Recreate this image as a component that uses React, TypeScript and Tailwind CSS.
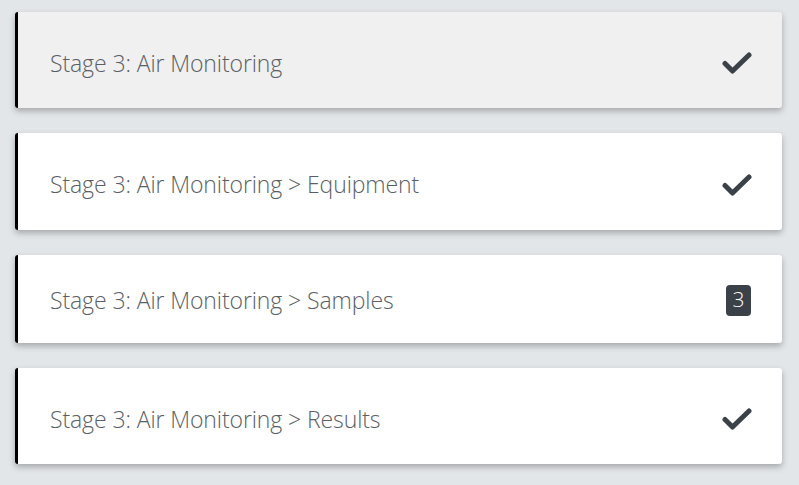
import React from "react";

const Check = () => (
  <svg width="30" height="22" viewBox="0 0 30 22" className="block">
    <path d="M3 11.5 L10.5 19 L27 3" fill="none" stroke="#3b4148" strokeWidth="5" strokeLinecap="round" strokeLinejoin="round" />
  </svg>
);

type Item = { label: string; status: "check" | number; bg: string; h: string; pt: string };

const items: Item[] = [
  { label: "Stage 3: Air Monitoring", status: "check", bg: "bg-[#f0f0f0]", h: "h-[96px]", pt: "pt-[6px]" },
  { label: "Stage 3: Air Monitoring > Equipment", status: "check", bg: "bg-white", h: "h-[97px]", pt: "pt-[6px]" },
  { label: "Stage 3: Air Monitoring > Samples", status: 3, bg: "bg-white", h: "h-[88px]", pt: "pt-[2px]" },
  { label: "Stage 3: Air Monitoring > Results", status: "check", bg: "bg-white", h: "h-[96px]", pt: "pt-[6px]" },
];

export default function App() {
  return (
    <div className="w-[799px] h-[485px] bg-[#e3e6e9] pt-[12px] pl-[15px] pr-[17px] flex flex-col gap-[25px] overflow-hidden" style={{ fontFamily: '"Open Sans", "Noto Sans", sans-serif' }}>
      {items.map((it, i) => (
        <div
          key={i}
          className={`${it.bg} ${it.h} ${it.pt} flex items-center justify-between border-l-[3px] border-black rounded-[3px] pl-[32px] pr-[30px] shadow-[0_3px_6px_rgba(0,0,0,0.28)]`}
        >
          <span className="text-[23px] font-light text-[#5a5f66] tracking-[-0.1px]">{it.label}</span>
          {it.status === "check" ? (
            <Check />
          ) : (
            <span className="w-[25px] h-[31px] rounded-[4px] bg-[#3b4148] text-white text-[21px] font-light flex items-center justify-center mr-[1px]">
              {it.status}
            </span>
          )}
        </div>
      ))}
    </div>
  );
}
